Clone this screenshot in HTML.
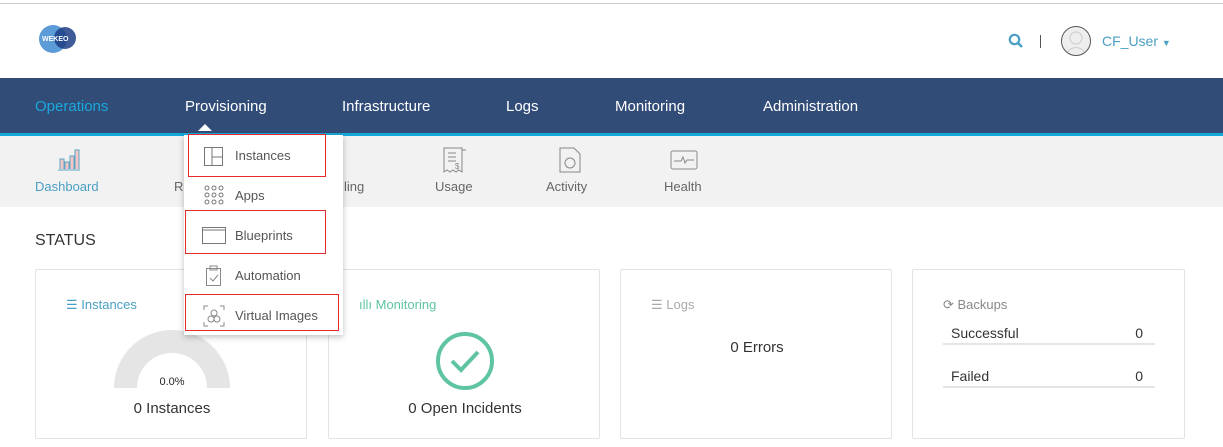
<!DOCTYPE html>
<html><head><style>
*{margin:0;padding:0;box-sizing:border-box}
body{width:1223px;height:447px;overflow:hidden;background:#fff;font-family:"Liberation Sans",sans-serif;position:relative}
.a{position:absolute}
.nav span{position:absolute;top:97px;color:#fff;font-size:15px}
.sub{color:#666;font-size:13px;position:absolute;top:179px}
.card{position:absolute;top:269px;height:170px;border:1px solid #e3e3e3;border-radius:2px;background:#fff}
.dd div.t{position:absolute;left:51px;font-size:13px;color:#555}
.box{position:absolute;border:1px solid #e52a2a}
</style></head><body>
<div class="a" style="top:3px;left:0;width:1223px;height:1px;background:#ccc"></div>
<svg class="a" style="left:38px;top:24px" width="42" height="30"><circle cx="15" cy="15" r="14" fill="#5b9bd8"/><circle cx="27" cy="14" r="11" fill="#1d3e86" opacity=".85"/><text x="4" y="17" font-size="7" fill="#fff" font-family="Liberation Sans" font-weight="bold">WEKEO</text></svg>
<svg class="a" style="left:1008px;top:33px" width="16" height="16"><circle cx="6.5" cy="6.5" r="4.7" fill="none" stroke="#4a9fc4" stroke-width="2.2"/><line x1="10" y1="10" x2="14" y2="14" stroke="#4a9fc4" stroke-width="2.5"/></svg>
<div class="a" style="left:1040px;top:35px;width:1px;height:13px;background:#555"></div>
<svg class="a" style="left:1060px;top:25px" width="32" height="32"><circle cx="16" cy="16" r="14.5" fill="#eee" stroke="#555"/><circle cx="16" cy="13" r="6" fill="none" stroke="#ccc"/><path d="M7 27q9-9 18 0" fill="none" stroke="#ccc"/></svg>
<div class="a" style="left:1102px;top:33px;font-size:14px;color:#4a9fc4">CF_User <span style="font-size:9px">▼</span></div>
<div class="a nav" style="top:78px;left:0;width:1223px;height:55px;background:#324c78"></div>
<div class="a" style="top:133px;left:0;width:1223px;height:3px;background:#14a8d8"></div>
<div class="nav"><span style="left:35px;color:#19a8dc;top:98px">Operations</span><span style="left:185px;top:98px">Provisioning</span><span style="left:342px;top:98px">Infrastructure</span><span style="left:506px;top:98px">Logs</span><span style="left:615px;top:98px">Monitoring</span><span style="left:763px;top:98px">Administration</span></div>
<div class="a" style="top:136px;left:0;width:1223px;height:71px;background:#f2f2f2"></div>
<svg class="a" style="left:56px;top:148px" width="26" height="24"><path d="M2 22h22M4 21v-10h4v10M9 21v-7h4v7M14 21v-13h4v13M19 21v-19h4v19" fill="#f4c6c6" stroke="#5ba6c6"/></svg>
<div class="sub" style="left:35px;color:#4a9fc4">Dashboard</div>
<div class="sub" style="left:174px">Re</div>
<div class="sub" style="left:344px">ling</div>
<svg class="a" style="left:442px;top:147px" width="26" height="26"><path d="M2 1h18v24l-3-2-3 2-3-2-3 2-3-2-3 2z M6 6h8M6 10h8M6 14h8M20 3h4" fill="none" stroke="#888"/><text x="13" y="22" font-size="8" fill="#888">$</text></svg>
<div class="sub" style="left:435px">Usage</div>
<svg class="a" style="left:559px;top:147px" width="22" height="26"><path d="M1 1h14l6 6v18h-20z" fill="none" stroke="#888"/><circle cx="11" cy="16" r="5" fill="none" stroke="#888"/></svg>
<div class="sub" style="left:546px">Activity</div>
<svg class="a" style="left:670px;top:150px" width="28" height="20"><rect x="1" y="1" width="26" height="18" rx="2" fill="none" stroke="#888"/><path d="M4 11h7l2-4 2 6 2-3h7" fill="none" stroke="#888"/></svg>
<div class="sub" style="left:664px">Health</div>
<div class="a" style="left:35px;top:232px;font-size:16px;color:#333">STATUS</div>
<div class="card" style="left:35px;width:272px">
<div class="a" style="left:30px;top:27px;font-size:13px;color:#4a9fc4">☰ Instances</div>
<svg class="a" style="left:76px;top:60px" width="120" height="60"><path d="M2 58a58 58 0 0 1 116 0h-23a35 35 0 0 0-70 0z" fill="#e5e5e5"/></svg>
<div class="a" style="left:0;width:272px;text-align:center;top:106px;font-size:11px;color:#222">0.0%</div>
<div class="a" style="left:0;width:272px;text-align:center;top:130px;font-size:15px;color:#333">0 Instances</div></div>
<div class="card" style="left:328px;width:272px">
<div class="a" style="left:30px;top:27px;font-size:13px;color:#5ec5a0">ıllı Monitoring</div>
<svg class="a" style="left:105px;top:60px" width="62" height="62"><circle cx="31" cy="31" r="27" fill="none" stroke="#5ec5a0" stroke-width="4"/><path d="M18 31l9 9 17-18" fill="none" stroke="#5ec5a0" stroke-width="4"/></svg>
<div class="a" style="left:0;width:272px;text-align:center;top:130px;font-size:15px;color:#333">0 Open Incidents</div></div>
<div class="card" style="left:620px;width:272px">
<div class="a" style="left:30px;top:27px;font-size:13px;color:#aaa">☰ Logs</div>
<div class="a" style="left:0;width:272px;text-align:center;top:69px;font-size:15px;color:#333">0 Errors</div></div>
<div class="card" style="left:912px;width:273px">
<div class="a" style="left:30px;top:27px;font-size:13px;color:#888">⟳ Backups</div>
<div class="a" style="left:30px;top:47px;width:212px;height:28px;border-bottom:2px solid #e5e5e5;font-size:14px;color:#333;padding:8px 0 0 8px">Successful<span style="float:right;margin-right:12px">0</span></div>
<div class="a" style="left:30px;top:90px;width:212px;height:28px;border-bottom:2px solid #e5e5e5;font-size:14px;color:#333;padding:8px 0 0 8px">Failed<span style="float:right;margin-right:12px">0</span></div></div>
<div class="a" style="left:198px;top:124px;width:0;height:0;border:7px solid transparent;border-bottom-color:#fff;border-top:0"></div>
<div class="a dd" style="left:184px;top:135px;width:159px;height:200px;background:#fff;box-shadow:0 2px 6px rgba(0,0,0,.25)">
<svg class="a" style="left:20px;top:12px" width="20" height="20"><rect x=".5" y=".5" width="18" height="18" fill="none" stroke="#777"/><path d="M8 1v18M8 10h11" stroke="#777"/></svg>
<div class="t" style="top:13px">Instances</div>
<svg class="a" style="left:20px;top:50px" width="20" height="20" fill="none" stroke="#777"><circle cx="3" cy="3" r="2"/><circle cx="10" cy="3" r="2"/><circle cx="17" cy="3" r="2"/><circle cx="3" cy="10" r="2"/><circle cx="10" cy="10" r="2"/><circle cx="17" cy="10" r="2"/><circle cx="3" cy="17" r="2"/><circle cx="10" cy="17" r="2"/><circle cx="17" cy="17" r="2"/></svg>
<div class="t" style="top:53px">Apps</div>
<svg class="a" style="left:18px;top:91px" width="26" height="20"><rect x=".5" y="1.5" width="23" height="16" fill="none" stroke="#777"/><path d="M1 4h23" stroke="#777"/></svg>
<div class="t" style="top:93px">Blueprints</div>
<svg class="a" style="left:22px;top:130px" width="16" height="22" fill="none" stroke="#888"><rect x=".5" y="3.5" width="14" height="17"/><rect x="4" y="1" width="7" height="4"/><path d="M4 13l3 3 5-6"/></svg>
<div class="t" style="top:133px">Automation</div>
<svg class="a" style="left:19px;top:170px" width="22" height="22" fill="none" stroke="#888"><path d="M1 5V1h4M17 1h4v4M1 17v4h4M17 21h4v-4"/><circle cx="11" cy="8" r="3"/><circle cx="8" cy="14" r="3"/><circle cx="14" cy="14" r="3"/></svg>
<div class="t" style="top:173px">Virtual Images</div></div>
<div class="box" style="left:188px;top:134px;width:138px;height:43px"></div>
<div class="box" style="left:185px;top:210px;width:141px;height:44px"></div>
<div class="box" style="left:185px;top:294px;width:154px;height:37px"></div>
</body></html>
